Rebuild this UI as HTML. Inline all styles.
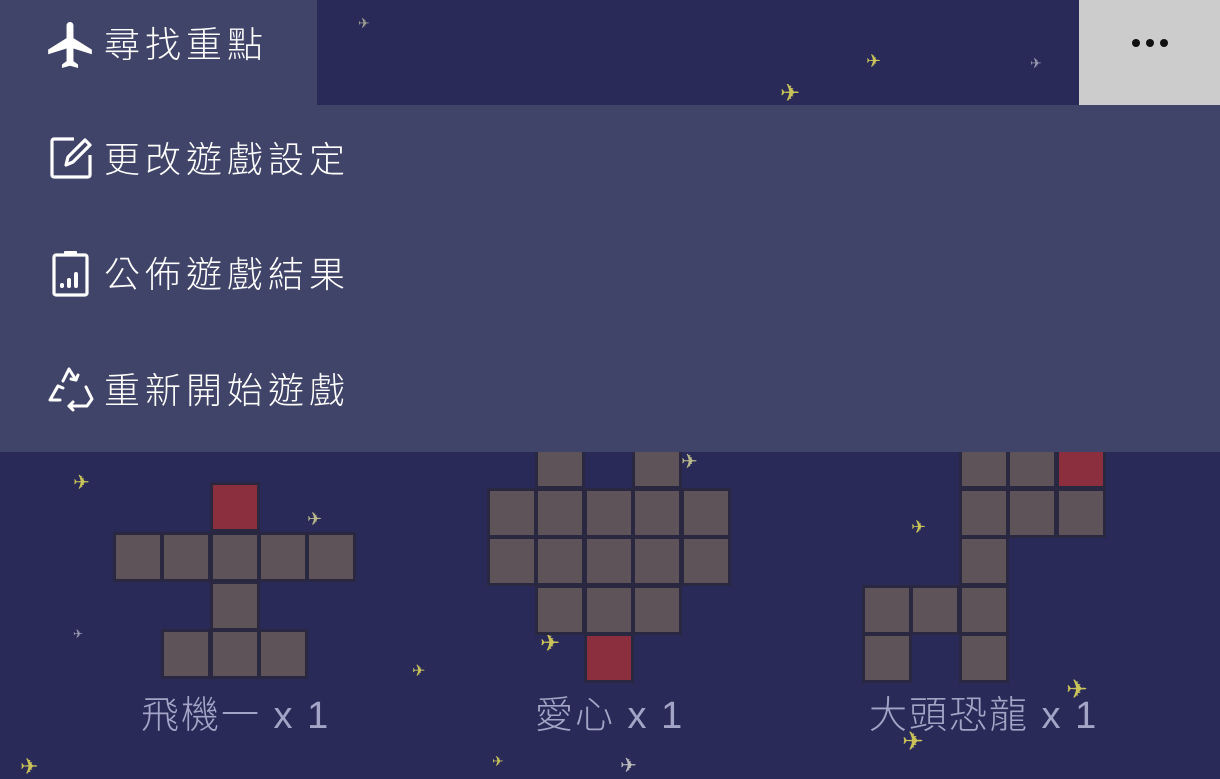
<!DOCTYPE html>
<html><head><meta charset="utf-8">
<style>
*{margin:0;padding:0;box-sizing:border-box}
body{width:1220px;height:779px;overflow:hidden;background:#292a58;position:relative;font-family:"Liberation Sans","Noto Sans CJK TC",sans-serif}
.c{position:absolute;width:50px;height:50px;background:#5e5359;border:3px solid #2a2840}
.r{background:#8b2f3e}
.lbl{position:absolute;top:684px;color:#a3a5c6;font-size:38px;font-weight:300;letter-spacing:2px;white-space:nowrap}
.p{position:absolute;color:#c9c35a;font-size:20px;line-height:1}
.menu{position:absolute;left:0;top:105px;width:1220px;height:347px;background:#414469;z-index:5}
.top{position:absolute;left:0;top:0;width:317px;height:106px;background:#414469;z-index:5}
.gray{position:absolute;left:1079px;top:0;width:141px;height:105px;background:#cccccc;z-index:5}
.dot{position:absolute;top:39px;width:8px;height:8px;border-radius:50%;background:#111}
.it{position:absolute;left:104px;color:#fff;font-size:36px;font-weight:300;letter-spacing:5px;white-space:nowrap;z-index:6;line-height:1}
.ic{position:absolute;z-index:6}
</style></head><body>

<div class="p" style="left:358px;top:16px;color:#a0a090;font-size:14px">✈</div>
<div class="p" style="left:866px;top:52px;font-size:18px">✈</div>
<div class="p" style="left:1030px;top:56px;color:#9a9ab0;font-size:14px">✈</div>
<div class="p" style="left:780px;top:82px;font-size:24px">✈</div>
<div class="p" style="left:73px;top:473px;font-size:20px">✈</div>
<div class="p" style="left:307px;top:510px;font-size:18px;color:#bbb98a">✈</div>
<div class="p" style="left:681px;top:452px;font-size:20px;color:#bbb98a">✈</div>
<div class="p" style="left:73px;top:628px;color:#9a9ab0;font-size:12px">✈</div>
<div class="p" style="left:412px;top:664px;font-size:16px">✈</div>
<div class="p" style="left:540px;top:632px;font-size:24px">✈</div>
<div class="p" style="left:911px;top:518px;font-size:18px">✈</div>
<div class="p" style="left:1066px;top:676px;font-size:26px">✈</div>
<div class="p" style="left:902px;top:728px;font-size:26px">✈</div>
<div class="p" style="left:20px;top:756px;font-size:22px">✈</div>
<div class="p" style="left:620px;top:756px;font-size:20px;color:#bbb">✈</div>
<div class="p" style="left:492px;top:754px;font-size:14px">✈</div>

<!-- plane -->
<div class="c r" style="left:210px;top:482px"></div>
<div class="c" style="left:113px;top:532px"></div><div class="c" style="left:161px;top:532px"></div><div class="c" style="left:210px;top:532px"></div><div class="c" style="left:258px;top:532px"></div><div class="c" style="left:306px;top:532px"></div>
<div class="c" style="left:210px;top:581px"></div>
<div class="c" style="left:161px;top:629px"></div><div class="c" style="left:210px;top:629px"></div><div class="c" style="left:258px;top:629px"></div>
<div class="lbl" style="left:141px">飛機一 x 1</div>

<!-- heart -->
<div class="c" style="left:535px;top:439px"></div><div class="c" style="left:632px;top:439px"></div>
<div class="c" style="left:487px;top:488px"></div><div class="c" style="left:535px;top:488px"></div><div class="c" style="left:584px;top:488px"></div><div class="c" style="left:632px;top:488px"></div><div class="c" style="left:681px;top:488px"></div>
<div class="c" style="left:487px;top:536px"></div><div class="c" style="left:535px;top:536px"></div><div class="c" style="left:584px;top:536px"></div><div class="c" style="left:632px;top:536px"></div><div class="c" style="left:681px;top:536px"></div>
<div class="c" style="left:535px;top:585px"></div><div class="c" style="left:584px;top:585px"></div><div class="c" style="left:632px;top:585px"></div>
<div class="c r" style="left:584px;top:633px"></div>
<div class="lbl" style="left:535px">愛心 x 1</div>

<!-- dino -->
<div class="c" style="left:959px;top:439px"></div><div class="c" style="left:1007px;top:439px"></div><div class="c r" style="left:1056px;top:439px"></div>
<div class="c" style="left:959px;top:488px"></div><div class="c" style="left:1007px;top:488px"></div><div class="c" style="left:1056px;top:488px"></div>
<div class="c" style="left:959px;top:536px"></div>
<div class="c" style="left:862px;top:585px"></div><div class="c" style="left:910px;top:585px"></div><div class="c" style="left:959px;top:585px"></div>
<div class="c" style="left:862px;top:633px"></div><div class="c" style="left:959px;top:633px"></div>
<div class="lbl" style="left:869px">大頭恐龍 x 1</div>

<div class="top"></div>
<div class="menu"></div>
<div class="gray"><div class="dot" style="left:53px"></div><div class="dot" style="left:67px"></div><div class="dot" style="left:81px"></div></div>

<svg class="ic" style="left:47px;top:22px" width="46" height="46" viewBox="2 2 19 20"><path fill="#fff" d="M21 16v-2l-8-5V3.5c0-.83-.67-1.5-1.5-1.5S10 2.67 10 3.5V9l-8 5v2l8-2.5V19l-2 1.5V22l3.5-1 3.5 1v-1.5L13 19v-5.5l8 2.5z"/></svg>
<div class="it" style="top:27px">尋找重點</div>

<svg class="ic" style="left:50px;top:135px" width="43" height="44" viewBox="0 0 43 44" fill="none" stroke="#fff" stroke-width="3.2" stroke-linejoin="round"><path d="M24 4H4a2 2 0 0 0-2 2v34a2 2 0 0 0 2 2h34a2 2 0 0 0 2-2V20"/><path d="M16 30l2-8L35 5l5 5-17 17z"/></svg>
<div class="it" style="top:142px">更改遊戲設定</div>

<svg class="ic" style="left:52px;top:249px" width="37" height="48" viewBox="0 0 37 48" fill="none" stroke="#fff" stroke-width="3.2"><rect x="2" y="6" width="33" height="40" rx="2"/><rect x="12" y="2" width="13" height="5" fill="#fff" stroke="none" rx="1"/><g fill="#fff" stroke="none"><rect x="8" y="34" width="4" height="5" rx="2"/><rect x="15" y="29" width="4" height="10" rx="2"/><rect x="22" y="23" width="4" height="16" rx="2"/></g></svg>
<div class="it" style="top:257px">公佈遊戲結果</div>

<svg class="ic" style="left:47px;top:365px" width="47" height="47" viewBox="0 0 47 47" fill="none" stroke="#fff" stroke-width="3" stroke-linecap="round" stroke-linejoin="round"><path d="M16 16l6-12 7 11"/><path d="M24 14l5 1 2-5"/><path d="M11 21l-8 14h10"/><path d="M8 26l3-5 5 2"/><path d="M39 22l6 12-5 7H22"/><path d="M26 37l-4 4 4 4"/></svg>
<div class="it" style="top:373px">重新開始遊戲</div>

</body></html>
